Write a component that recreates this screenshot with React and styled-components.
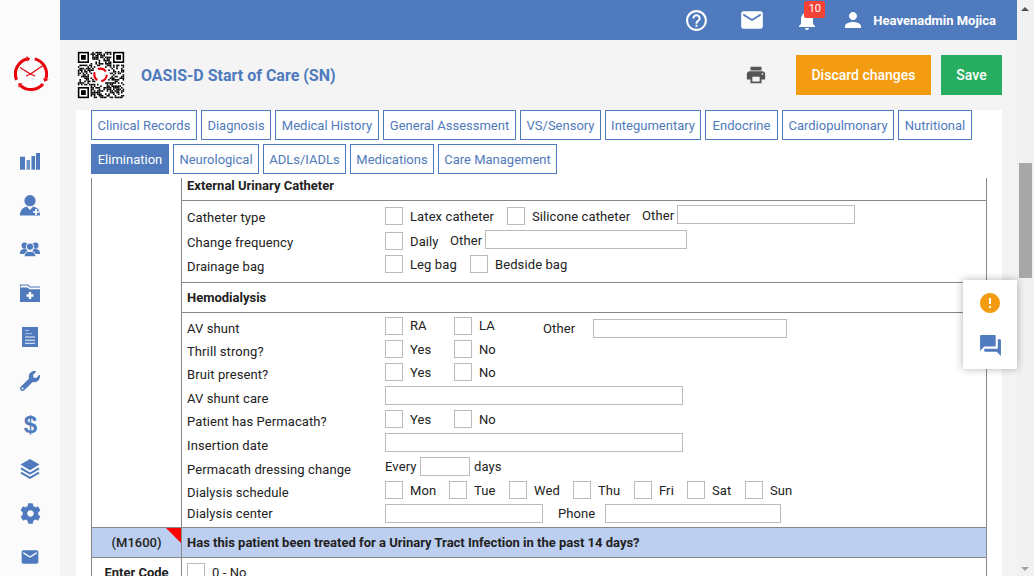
import React from "react";
import styled, { createGlobalStyle } from "styled-components";
import {
  MdOutlineHelpOutline,
  MdEmail,
  MdNotifications,
  MdPerson,
  MdPrint,
  MdError,
  MdQuestionAnswer,
} from "react-icons/md";
import { FaWrench, FaCog } from "react-icons/fa";

const Global = createGlobalStyle`
  html, body { margin: 0; padding: 0; height: 100%; overflow: hidden; }
  body { font-family: Roboto, "Liberation Sans", sans-serif; font-size: 13px; color: #222; }
  * { box-sizing: border-box; }
`;

const BLUE = "#4f7abd";

const Page = styled.div`
  display: flex;
  width: 1034px;
  height: 576px;
  overflow: hidden;
  position: relative;
`;

const Sidebar = styled.nav`
  width: 60px;
  flex: none;
  background: #fbfbfb;
  display: flex;
  flex-direction: column;
  align-items: center;
  padding-top: 55px;
  color: ${BLUE};
`;

const LogoWrap = styled.div`
  display: flex;
  margin-left: 2px;
`;

const SideItem = styled.div`
  height: 44px;
  width: 100%;
  flex: none;
  display: flex;
  align-items: center;
  justify-content: center;
  margin-top: ${(p) => p.$top || 0}px;
`;

const DollarGlyph = styled.span`
  font: 700 24px "Liberation Sans", sans-serif;
  line-height: 24px;
  color: ${BLUE};
  margin-left: 1px;
`;

const Main = styled.div`
  flex: 1;
  min-width: 0;
  display: flex;
  flex-direction: column;
  background: #f4f4f4;
`;

const Topbar = styled.header`
  height: 40px;
  flex: none;
  background: ${BLUE};
  color: #fff;
  display: flex;
  align-items: center;
  justify-content: flex-end;
  padding-right: 21px;
`;

const TopIcon = styled.div`
  position: relative;
  display: flex;
  margin-right: ${(p) => p.$mr}px;
`;

const Badge = styled.span`
  position: absolute;
  top: -7px;
  left: 9px;
  width: 21px;
  height: 17px;
  background: #f44336;
  border-radius: 2px;
  font-size: 11px;
  line-height: 16px;
  text-align: center;
  color: #fff;
`;

const UserName = styled.span`
  font-weight: 700;
  font-size: 13px;
  margin-left: 8px;
`;

const SubHeader = styled.div`
  height: 70px;
  flex: none;
  display: flex;
  align-items: center;
  padding: 0 15px 0 17px;
`;

const Title = styled.h1`
  margin: 0 0 0 16px;
  font-size: 16px;
  font-weight: 700;
  color: ${BLUE};
  flex: 1;
`;

const PrintBtn = styled.div`
  display: flex;
  color: #555;
  margin-right: 29px;
`;

const ActionBtn = styled.button`
  height: 40px;
  border: 0;
  background: ${(p) => p.$bg};
  color: #fff;
  font: 500 14px Roboto, sans-serif;
  width: ${(p) => p.$w}px;
  margin-left: ${(p) => p.$ml || 0}px;
`;

const Sheet = styled.div`
  flex: 1;
  min-height: 0;
  overflow: hidden;
  background: #fff;
  margin: 0 15px 0 16px;
  padding: 0 15px;
`;

const Tabs = styled.div`
  display: flex;
  flex-wrap: wrap;
  gap: 4px;
  margin-bottom: 4px;
`;

const Tab = styled.div`
  height: 30px;
  width: ${(p) => p.$w}px;
  line-height: 30px;
  text-align: center;
  border: 1px solid ${BLUE};
  color: ${(p) => (p.$active ? "#fff" : BLUE)};
  background: ${(p) => (p.$active ? BLUE : "#fff")};
  font-size: 13px;
  white-space: nowrap;
`;

const Table = styled.div`
  width: 896px;
  border-left: 1px solid #888;
  border-right: 1px solid #888;
`;

const Section = styled.div`
  display: flex;
  background: ${(p) => p.$bg || "transparent"};
  border-bottom: ${(p) => (p.$line ? "1px solid #888" : "0")};
`;

const CodeCell = styled.div`
  width: 90px;
  flex: none;
  border-right: 1px solid #888;
  position: relative;
  display: flex;
  align-items: center;
  justify-content: center;
  font-weight: ${(p) => (p.$bold ? 700 : 500)};
  font-size: 13px;
`;

const Corner = styled.span`
  position: absolute;
  top: 0;
  right: 0;
  width: 0;
  height: 0;
  border-top: 15px solid #f00;
  border-left: 15px solid transparent;
`;

const Body = styled.div`
  flex: 1;
  min-width: 0;
`;

const Heading = styled.div`
  height: ${(p) => p.$h}px;
  padding: 0 0 ${(p) => p.$pb || 0}px 5px;
  display: flex;
  align-items: center;
  font-weight: 700;
  font-size: 13px;
  border-bottom: ${(p) => (p.$flat ? "0" : "1px solid #888")};
`;

const Group = styled.div`
  border-bottom: ${(p) => (p.$line ? "1px solid #888" : "0")};
  padding-top: ${(p) => p.$pt || 0}px;
`;

const Row = styled.div`
  height: ${(p) => p.$h}px;
  display: flex;
  align-items: flex-start;
  padding-left: 5px;
`;

const Label = styled.div`
  width: 198px;
  flex: none;
  line-height: 18px;
  margin-top: ${(p) => 2 + (p.$dy || 0)}px;
  font-size: 13px;
  letter-spacing: 0.1px;
  white-space: nowrap;
`;

const Check = styled.span`
  width: 18px;
  height: 18px;
  flex: none;
  border: 1px solid #bbb;
  background: #fff;
`;

const Option = styled.div`
  display: flex;
  align-items: flex-start;
  width: ${(p) => (p.$w ? `${p.$w}px` : "auto")};
  flex: none;
`;

const OptText = styled.span`
  margin-left: 7px;
  margin-top: ${(p) => (p.$dy === undefined ? 1 : p.$dy)}px;
  line-height: 18px;
  font-size: 13px;
  letter-spacing: 0.1px;
  white-space: nowrap;
`;

const Plain = styled.span`
  line-height: 18px;
  font-size: 13px;
  letter-spacing: 0.1px;
  width: ${(p) => (p.$w ? `${p.$w}px` : "auto")};
  margin-left: ${(p) => p.$ml || 0}px;
  margin-top: ${(p) => p.$mt || 0}px;
  white-space: nowrap;
  flex: none;
`;

const Input = styled.span`
  display: block;
  flex: none;
  width: ${(p) => p.$w}px;
  height: 19px;
  border: 1px solid #bbb;
  background: #fff;
  margin-top: ${(p) => p.$mt || 0}px;
  margin-left: ${(p) => p.$ml || 0}px;
`;

const Scrollbar = styled.div`
  width: 17px;
  flex: none;
  background: #f1f1f1;
  position: relative;
`;

const Thumb = styled.div`
  position: absolute;
  left: 2px;
  top: 163px;
  width: 13px;
  height: 115px;
  background: #a8a8a8;
`;

const Arrow = styled.span`
  position: absolute;
  left: 4px;
  width: 0;
  height: 0;
  border-left: 4px solid transparent;
  border-right: 4px solid transparent;
  ${(p) =>
    p.$down
      ? "bottom: 5px; border-top: 4px solid #a3a3a3;"
      : "top: 7px; border-bottom: 4px solid #505050;"}
`;

const FloatPanel = styled.aside`
  position: absolute;
  left: 963px;
  top: 280px;
  width: 54px;
  height: 89px;
  background: #fff;
  box-shadow: 0 0 8px rgba(0, 0, 0, 0.3);
  display: flex;
  flex-direction: column;
  align-items: center;
  gap: 18px;
  padding-top: 11px;
`;

// polar point on the logo ring, angle clockwise from 12 o'clock
const pt = (deg, r) => {
  const a = (deg * Math.PI) / 180;
  return [18 + r * Math.sin(a), 18 - r * Math.cos(a)];
};

const LogoArc = ({ from, to }) => {
  const [x1, y1] = pt(from, 15.6);
  const [x2, y2] = pt(to, 15.6);
  const span = (to - from + 360) % 360;
  const head = [pt(to, 18.6), pt(to, 12.6), pt(to + 12, 15.6)]
    .map((p) => p.join(","))
    .join(" ");
  return (
    <g>
      <path
        d={`M${x1} ${y1} A15.6 15.6 0 ${span > 180 ? 1 : 0} 1 ${x2} ${y2}`}
        stroke="#e8000b"
        strokeWidth="3"
        fill="none"
      />
      <polygon points={head} fill="#e8000b" />
    </g>
  );
};

const Logo = () => (
  <svg width="38" height="38" viewBox="-1 -1 38 38">
    <LogoArc from={248} to={345} />
    <LogoArc from={14} to={108} />
    <LogoArc from={130} to={222} />
    <path
      d="M7 11.5 L17.5 18 L30 9.5 M17.5 18 L13 20 M17.5 18 L22 20"
      stroke="#e8000b"
      strokeWidth="1.1"
      fill="none"
    />
  </svg>
);

const Bars = () => (
  <svg width="20" height="17" viewBox="0 0 20 17" fill={BLUE}>
    <rect x="0" y="3.7" width="5" height="13" />
    <rect x="6.5" y="7" width="3.6" height="9.7" opacity="0.8" />
    <rect x="11.5" y="3" width="3.6" height="13.7" />
    <rect x="16" y="0" width="4" height="16.7" />
  </svg>
);

const DoctorIcon = () => (
  <svg width="20" height="21" viewBox="0 0 20 21">
    <circle cx="10" cy="5.7" r="5.6" fill={BLUE} />
    <path d="M0 20.5 C0 15 3 12.5 6.8 11.5 L10 15 L13.2 11.5 C17 12.5 20 15 20 20.5 Z" fill={BLUE} />
    <path d="M13 17 H19 M16 14 V20" stroke="#fff" strokeWidth="1.7" />
  </svg>
);

const UsersIcon = () => (
  <svg width="20" height="15" viewBox="0 0 20 15" fill={BLUE}>
    <circle cx="4.6" cy="3.6" r="3.1" />
    <circle cx="15.4" cy="3.6" r="3.1" />
    <path d="M0 11.5 C0 8 2 7 4.8 7 C7 7 8 8.5 8 12 H0 Z" />
    <path d="M20 11.5 C20 8 18 7 15.2 7 C13 7 12 8.5 12 12 H20 Z" />
    <circle cx="10" cy="4.6" r="3.7" stroke="#fbfbfb" strokeWidth="1" />
    <path d="M4.2 14.8 C4.2 10.5 7 9.3 10 9.3 C13 9.3 15.8 10.5 15.8 14.8 Z" stroke="#fbfbfb" strokeWidth="1" />
  </svg>
);

const FolderIcon = () => (
  <svg width="20" height="18" viewBox="0 0 20 18" fill={BLUE}>
    <path d="M0 2.8 V0.5 H8 L10.3 2.4 H20 V3.4 H9.8 L7.6 1.6 H1 V2.8 Z" />
    <path d="M0 3.6 H7.4 L9.6 5.2 H20 V18 H0 Z" />
    <path d="M6.5 11.5 H13.5 M10 8 V15" stroke="#fff" strokeWidth="2.4" />
  </svg>
);

const FileIcon = () => (
  <svg width="16" height="20" viewBox="0 0 16 20">
    <rect width="16" height="20" fill={BLUE} />
    <path d="M3 3.5 H7 M3 6.7 H10" stroke="#fff" strokeWidth="1" opacity="0.55" />
    <path d="M3 10 H13 M3 13.2 H13 M3 16.3 H13" stroke="#fff" strokeWidth="1" opacity="0.9" />
  </svg>
);

const LayersIcon = () => (
  <svg width="20" height="20" viewBox="0 0 20 20">
    <path d="M10 0 L19.5 5.6 L10 11.2 L0.5 5.6 Z" fill={BLUE} />
    <path d="M1 9.4 L10 14.7 L19 9.4 M1 13.6 L10 18.9 L19 13.6" fill="none" stroke={BLUE} strokeWidth="2" />
  </svg>
);

// fake qr pattern, seeded so it stays the same on every render
const qrCells = () => {
  const n = 29;
  const cells = [];
  let s = 7331;
  const finder = (x, y) => (x < 8 && y < 8) || (x > 20 && y < 8) || (x < 8 && y > 20);
  for (let y = 0; y < n; y++) {
    for (let x = 0; x < n; x++) {
      s = (s * 1103515245 + 12345) & 0x7fffffff;
      const mid = Math.hypot(x - 14, y - 14) < 5.6;
      if (!finder(x, y) && !mid && (s >> 16) % 100 < 58) cells.push([x, y]);
    }
  }
  return cells;
};

const Finder = ({ x, y }) => (
  <g>
    <rect x={x} y={y} width="7" height="7" fill="#000" />
    <rect x={x + 1} y={y + 1} width="5" height="5" fill="#fff" />
    <rect x={x + 2} y={y + 2} width="3" height="3" fill="#000" />
  </g>
);

const QrCode = () => (
  <svg width="48" height="48" viewBox="-0.5 -0.5 30 30">
    <rect x="-0.5" y="-0.5" width="30" height="30" fill="#fff" />
    {qrCells().map(([x, y]) => (
      <rect key={`${x}-${y}`} x={x} y={y} width="1" height="1" fill="#000" />
    ))}
    <Finder x={0} y={0} />
    <Finder x={22} y={0} />
    <Finder x={0} y={22} />
    <circle cx="14.2" cy="14.4" r="3.9" fill="none" stroke="#e8000b" strokeWidth="1.3" strokeDasharray="5.5 2.6" />
  </svg>
);

const tabs = [
  ["Clinical Records", 106],
  ["Diagnosis", 70],
  ["Medical History", 104],
  ["General Assessment", 133],
  ["VS/Sensory", 81],
  ["Integumentary", 96],
  ["Endocrine", 73],
  ["Cardiopulmonary", 112],
  ["Nutritional", 74],
  ["Elimination", 78],
  ["Neurological", 86],
  ["ADLs/IADLs", 83],
  ["Medications", 84],
  ["Care Management", 119],
];

const days = [
  ["Mon", 64],
  ["Tue", 60],
  ["Wed", 64],
  ["Thu", 61],
  ["Fri", 53],
  ["Sat", 58],
  ["Sun"],
];

const YesNo = () => (
  <>
    <Option $w={69}>
      <Check />
      <OptText>Yes</OptText>
    </Option>
    <Option>
      <Check />
      <OptText>No</OptText>
    </Option>
  </>
);

const App = () => {
  return (
    <Page>
      <Global />
      <Sidebar>
        <LogoWrap><Logo /></LogoWrap>
        <SideItem $top={46}><Bars /></SideItem>
        <SideItem><DoctorIcon /></SideItem>
        <SideItem><UsersIcon /></SideItem>
        <SideItem><FolderIcon /></SideItem>
        <SideItem><FileIcon /></SideItem>
        <SideItem><FaWrench size={20} /></SideItem>
        <SideItem><DollarGlyph>$</DollarGlyph></SideItem>
        <SideItem><LayersIcon /></SideItem>
        <SideItem><FaCog size={21} /></SideItem>
        <SideItem><MdEmail size={20} /></SideItem>
      </Sidebar>
      <Main>
        <Topbar>
          <TopIcon $mr={30}><MdOutlineHelpOutline size={25} /></TopIcon>
          <TopIcon $mr={30}><MdEmail size={26} /></TopIcon>
          <TopIcon $mr={22}>
            <MdNotifications size={24} />
            <Badge>10</Badge>
          </TopIcon>
          <TopIcon $mr={0}><MdPerson size={24} /></TopIcon>
          <UserName>Heavenadmin Mojica</UserName>
        </Topbar>
        <SubHeader>
          <QrCode />
          <Title>OASIS-D Start of Care (SN)</Title>
          <PrintBtn><MdPrint size={22} /></PrintBtn>
          <ActionBtn $bg="#f39c12" $w={135}>Discard changes</ActionBtn>
          <ActionBtn $bg="#27ae60" $w={61} $ml={10}>Save</ActionBtn>
        </SubHeader>
        <Sheet>
          <Tabs>
            {tabs.map(([t, w]) => (
              <Tab key={t} $w={w} $active={t === "Elimination"}>{t}</Tab>
            ))}
          </Tabs>
          <Table>
            <Section $line>
              <CodeCell />
              <Body>
                <Heading $h={23} $pb={7}>External Urinary Catheter</Heading>
                <Group $line $pt={6}>
                  <Row $h={25}>
                    <Label>Catheter type</Label>
                    <Option $w={122}><Check /><OptText>Latex catheter</OptText></Option>
                    <Option $w={135}><Check /><OptText>Silicone catheter</OptText></Option>
                    <Plain $w={35}>Other</Plain>
                    <Input $w={178} $mt={-2} />
                  </Row>
                  <Row $h={23}>
                    <Label>Change frequency</Label>
                    <Option $w={65}><Check /><OptText>Daily</OptText></Option>
                    <Plain $w={35}>Other</Plain>
                    <Input $w={202} $mt={-2} />
                  </Row>
                  <Row $h={27}>
                    <Label $dy={1}>Drainage bag</Label>
                    <Option $w={85}><Check /><OptText>Leg bag</OptText></Option>
                    <Option><Check /><OptText>Bedside bag</OptText></Option>
                  </Row>
                </Group>
                <Heading $h={30}>Hemodialysis</Heading>
                <Group $pt={4}>
                  <Row $h={23}>
                    <Label $dy={1}>AV shunt</Label>
                    <Option $w={69}><Check /><OptText $dy={0}>RA</OptText></Option>
                    <Option $w={89}><Check /><OptText $dy={0}>LA</OptText></Option>
                    <Plain $w={50} $mt={3}>Other</Plain>
                    <Input $w={194} $mt={2} />
                  </Row>
                  <Row $h={23}>
                    <Label $dy={1}>Thrill strong?</Label>
                    <YesNo />
                  </Row>
                  <Row $h={23}>
                    <Label $dy={1}>Bruit present?</Label>
                    <YesNo />
                  </Row>
                  <Row $h={24}>
                    <Label $dy={2}>AV shunt care</Label>
                    <Input $w={298} />
                  </Row>
                  <Row $h={23}>
                    <Label $dy={1}>Patient has Permacath?</Label>
                    <YesNo />
                  </Row>
                  <Row $h={24}>
                    <Label $dy={2}>Insertion date</Label>
                    <Input $w={298} />
                  </Row>
                  <Row $h={24}>
                    <Label $dy={2}>Permacath dressing change</Label>
                    <Plain $w={35} $mt={1}>Every</Plain>
                    <Input $w={50} />
                    <Plain $ml={4} $mt={1}>days</Plain>
                  </Row>
                  <Row $h={23}>
                    <Label $dy={1}>Dialysis schedule</Label>
                    {days.map(([d, w]) => (
                      <Option key={d} $w={w}><Check /><OptText>{d}</OptText></Option>
                    ))}
                  </Row>
                  <Row $h={23}>
                    <Label $dy={-1}>Dialysis center</Label>
                    <Input $w={158} />
                    <Plain $ml={15} $w={47} $mt={1}>Phone</Plain>
                    <Input $w={176} />
                  </Row>
                </Group>
              </Body>
            </Section>
            <Section $line $bg="#bccff0">
              <CodeCell>
                (M1600)
                <Corner />
              </CodeCell>
              <Body>
                <Heading $h={29} $flat>
                  Has this patient been treated for a Urinary Tract Infection in the past 14 days?
                </Heading>
              </Body>
            </Section>
            <Section>
              <CodeCell $bold>Enter Code</CodeCell>
              <Body>
                <Group $pt={5}>
                  <Row $h={24}>
                    <Option><Check /><OptText>0 - No</OptText></Option>
                  </Row>
                </Group>
              </Body>
            </Section>
          </Table>
        </Sheet>
      </Main>
      <Scrollbar>
        <Arrow />
        <Thumb />
        <Arrow $down />
      </Scrollbar>
      <FloatPanel>
        <MdError size={24} color="#f39c12" />
        <MdQuestionAnswer size={25} color={BLUE} />
      </FloatPanel>
    </Page>
  );
};

export default App;
